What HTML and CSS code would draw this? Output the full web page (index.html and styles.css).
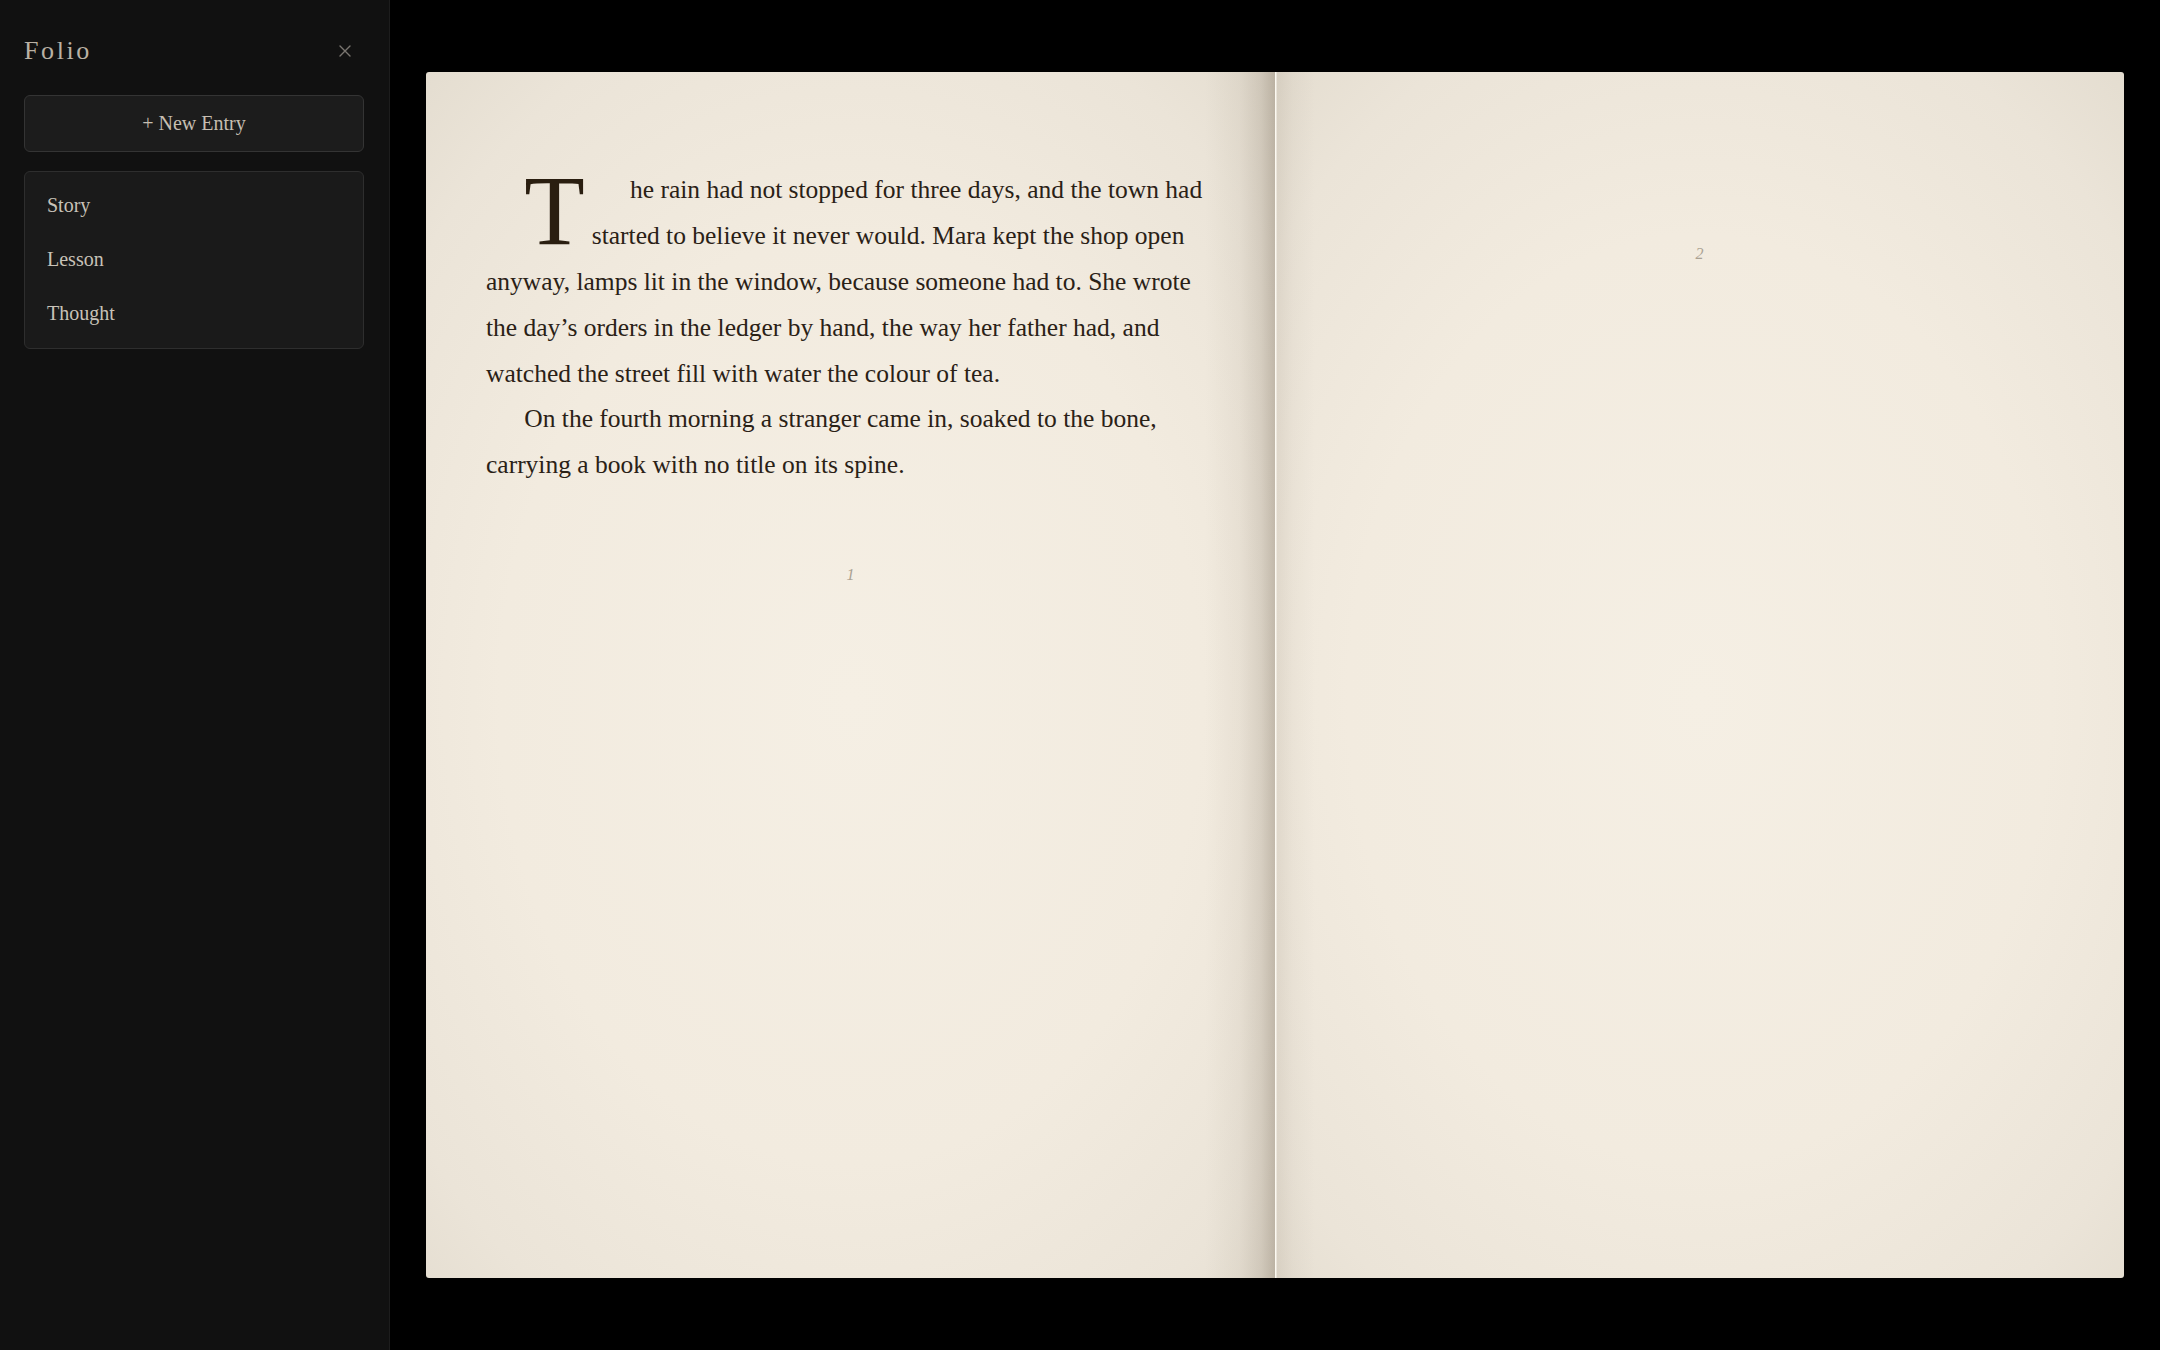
FILE: index.html
```html
<!DOCTYPE html>
<html lang="en">
<head>
<meta charset="utf-8">
<title>Folio</title>
<link rel="stylesheet" href="styles.css">
</head>
<body>
<div class="app">
  <aside class="sidebar">
    <div class="side-head">
      <h1 class="brand">Folio</h1>
      <button class="close" aria-label="Close">
        <svg viewBox="0 0 14 14" width="14" height="14"><path d="M2 2 L12 12 M12 2 L2 12" stroke="currentColor" stroke-width="1.4" fill="none" stroke-linecap="round"/></svg>
      </button>
    </div>
    <button class="new-entry">+ New Entry</button>
    <ul class="entry-types">
      <li class="entry-type">Story</li>
      <li class="entry-type">Lesson</li>
      <li class="entry-type">Thought</li>
    </ul>
  </aside>
  <main class="stage">
    <div class="book">
      <section class="page page-left">
        <div class="page-text">
          <p class="para first"><span class="dropcap">T</span>he rain had not stopped for three days, and the town had started to believe it never would. Mara kept the shop open anyway, lamps lit in the window, because someone had to. She wrote the day’s orders in the ledger by hand, the way her father had, and watched the street fill with water the colour of tea.</p>
          <p class="para">On the fourth morning a stranger came in, soaked to the bone, carrying a book with no title on its spine.</p>
        </div>
        <div class="page-num">1</div>
      </section>
      <section class="page page-right">
        <div class="page-text"></div>
        <div class="page-num">2</div>
      </section>
    </div>
  </main>
</div>
</body>
</html>
```
FILE: styles.css
```css
* { box-sizing: border-box; }
html, body { margin: 0; padding: 0; height: 100%; }
body {
  background: #000;
  font-family: "Liberation Serif", "Times New Roman", serif;
}
.app {
  display: flex;
  height: 100vh;
}
.sidebar {
  width: 390px;
  flex: none;
  background: #111111;
  border-right: 1px solid #1d1d1d;
  padding: 24px 25px 24px 24px;
  display: flex;
  flex-direction: column;
}
.side-head {
  height: 54px;
  display: flex;
  align-items: center;
  justify-content: space-between;
  margin-bottom: 17px;
}
.brand {
  margin: 0;
  font-weight: normal;
  font-size: 26px;
  letter-spacing: 0.1em;
  color: #b9b1a4;
  line-height: 1;
}
.close {
  background: none;
  border: 0;
  padding: 0;
  width: 20px;
  height: 20px;
  margin-right: 9px;
  color: #7a7670;
  display: flex;
  align-items: center;
  justify-content: center;
}
.close svg { width: 14px; height: 14px; }
.new-entry {
  height: 57px;
  width: 100%;
  background: #1c1c1c;
  border: 1px solid #343434;
  border-radius: 6px;
  color: #c6beb1;
  font-family: "Liberation Serif", "Times New Roman", serif;
  font-size: 20px;
  margin: 0 0 19px;
}
.entry-types {
  list-style: none;
  margin: 0;
  padding: 6px 0 8px;
  background: #1a1a1a;
  border: 1px solid #2e2e2e;
  border-radius: 6px;
}
.entry-type {
  padding: 14px 22px;
  line-height: 26px;
  font-size: 20px;
  color: #c8c2b8;
}
.stage {
  flex: 1;
  padding: 72px 36px;
  display: flex;
  background: #000;
}
.book {
  flex: 1;
  display: grid;
  grid-template-columns: 1fr 1fr;
  border-radius: 3px;
  overflow: hidden;
}
.page {
  padding: 95px 60px 0;
  background: radial-gradient(ellipse 75% 70% at 50% 52%, #f5efe4 0%, #f2ebdf 55%, #ebe4d8 85%, #e4ddd0 100%);
  position: relative;
  color: #2a2116;
}
.page-left::after {
  content: "";
  position: absolute;
  top: 0; bottom: 0; right: 0;
  width: 70px;
  background: linear-gradient(to left, rgba(90,75,55,0.30) 0, rgba(90,75,55,0.16) 14px, rgba(90,75,55,0.06) 35px, rgba(90,75,55,0) 70px);
  pointer-events: none;
}
.page-right::before {
  content: "";
  position: absolute;
  top: 0; bottom: 0; left: 0;
  width: 40px;
  background: linear-gradient(to right, rgba(255,252,245,0.9) 0, rgba(255,252,245,0.9) 1px, rgba(90,75,55,0.10) 2px, rgba(90,75,55,0.04) 18px, rgba(90,75,55,0) 40px);
  pointer-events: none;
}
.para {
  margin: 0;
  font-size: 25.5px;
  line-height: 1.8;
  text-indent: 1.5em;
}
.dropcap {
  float: left;
  font-size: 99px;
  line-height: 0.89;
  margin: 0 7px 0 38.25px;
  text-indent: 0;
  color: #2a1e10;
}
.page-num {
  margin-top: 75px;
  text-align: center;
  font-style: italic;
  font-size: 16px;
  line-height: 24px;
  color: #aaa192;
}
```
